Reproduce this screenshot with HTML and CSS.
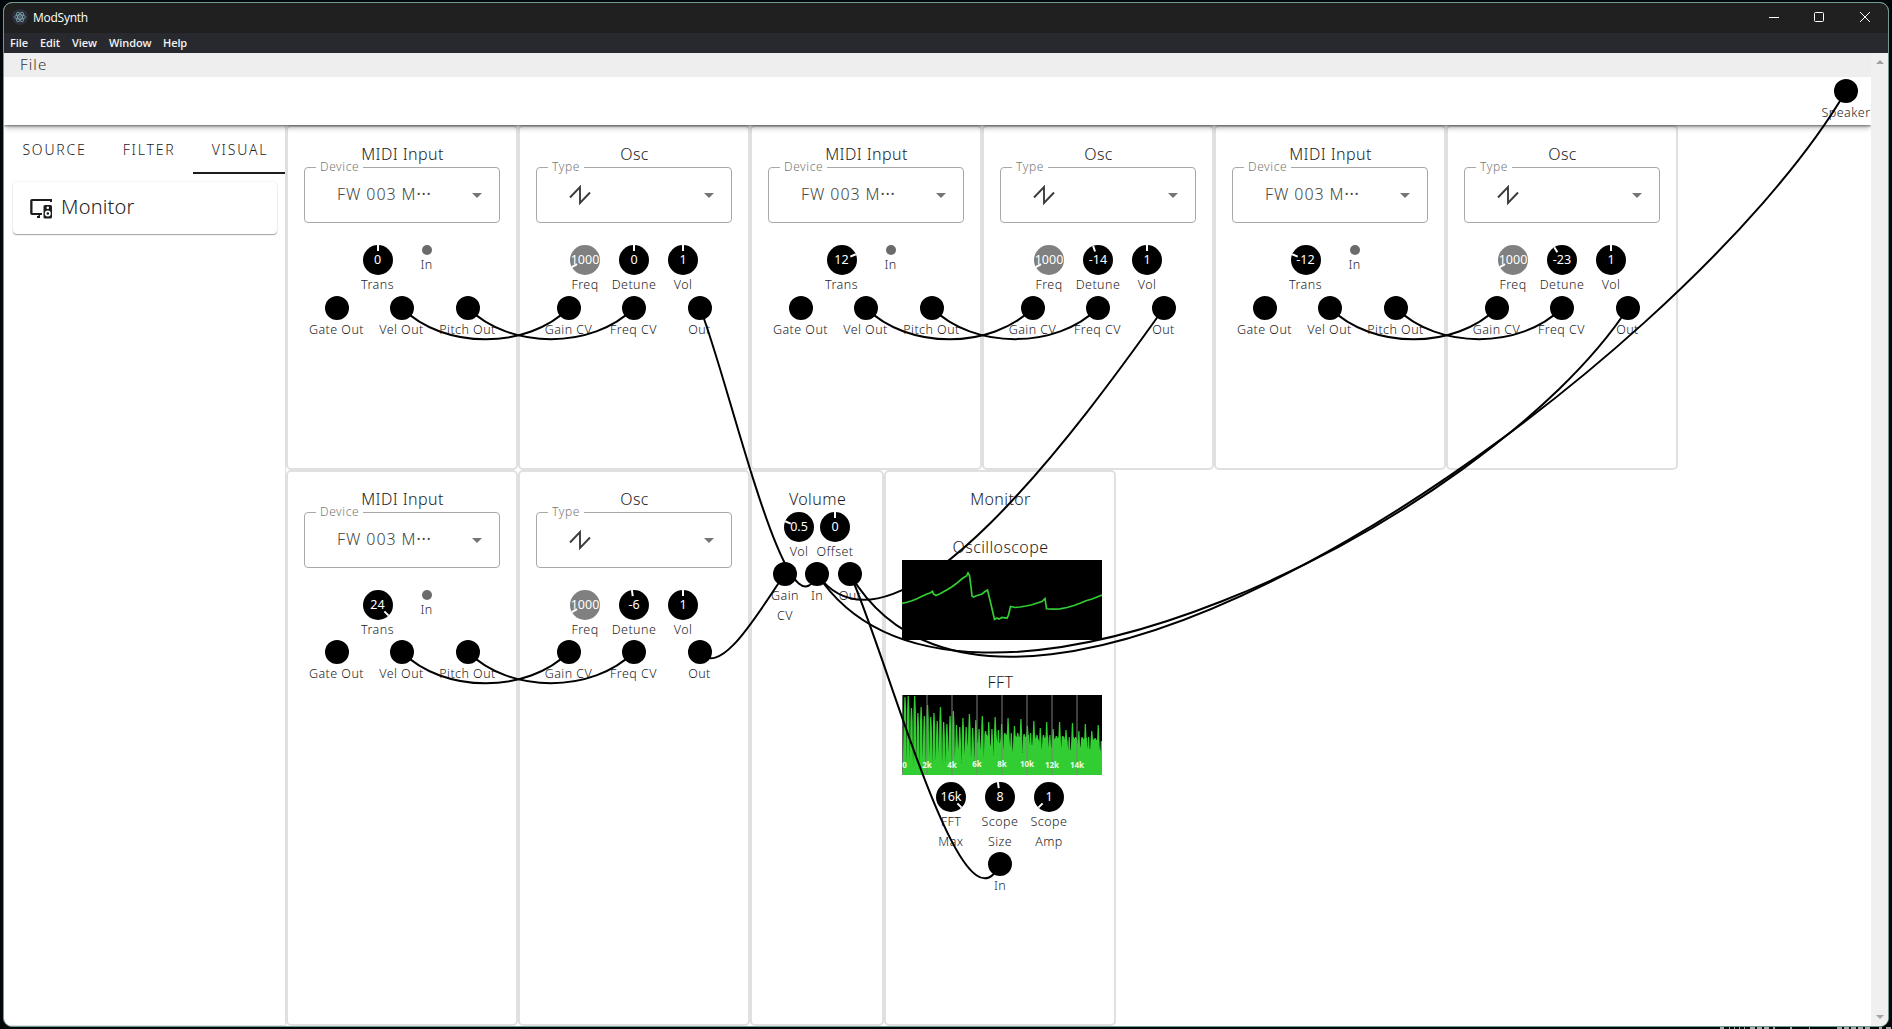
FILE: index.html
```
<!DOCTYPE html>
<html lang="en">
<head>
<meta charset="utf-8">
<title>ModSynth</title>
<link rel="stylesheet" href="styles.css">
</head>
<body>
<div class="window">
  <div class="titlebar">
    <svg class="app-icon" viewBox="0 0 16 16"><circle cx="8" cy="8" r="8" fill="#2b2e3b"/><g fill="none" stroke="#8fb9bf" stroke-width=".7"><ellipse cx="8" cy="8" rx="5.4" ry="2.1"/><ellipse cx="8" cy="8" rx="5.4" ry="2.1" transform="rotate(60 8 8)"/><ellipse cx="8" cy="8" rx="5.4" ry="2.1" transform="rotate(120 8 8)"/></g><circle cx="8" cy="8" r=".8" fill="#8fb9bf"/></svg>
    <span class="app-title">ModSynth</span>
    <svg class="win-buttons" viewBox="0 0 102 12" fill="none" stroke="#fff" stroke-width="1"><path d="M0 6.500h10"/><rect x="45.500" y="1.500" width="9" height="9" rx="1"/><path d="M91 1l10 10M101 1l-10 10"/></svg>
  </div>
  <div class="menubar"><span class="m-file">File</span><span class="m-edit">Edit</span><span class="m-view">View</span><span class="m-window">Window</span><span class="m-help">Help</span></div>
  <div class="client">
    <div class="page">
      <div class="filebar">File</div>
      <header class="header"><div class="speaker"><i class="jack"></i><span class="label">Speaker</span></div></header>
      <div class="body">
        <aside class="sidebar">
          <nav class="tabs"><span class="tab t1">SOURCE</span><span class="tab t2">FILTER</span><span class="tab t3 active">VISUAL</span></nav>
          <div class="card">
            <svg class="monitor-icon" viewBox="0 0 24 24" fill="#1c1c1e"><path d="M3 3h20v3h-2V5H3.500v12H13v2h-2v3H8v-2h1.500v-1H3a1.800 1.800 0 0 1-1.800-1.800V4.800A1.800 1.800 0 0 1 3 3z"/><path fill-rule="evenodd" d="M16 9h5.500A1.500 1.500 0 0 1 23 10.500V21a1.500 1.500 0 0 1-1.500 1.500H16a1.500 1.500 0 0 1-1.500-1.500V10.500A1.500 1.500 0 0 1 16 9zM18.800 10.500a1.300 1.300 0 1 0 0 2.600 1.300 1.300 0 0 0 0-2.600zM18.800 14.500a3 3 0 1 0 0 6 3 3 0 0 0 0-6zm0 1.700a1.300 1.300 0 1 1 0 2.600 1.300 1.300 0 0 1 0-2.600z"/></svg>
            <span>Monitor</span>
          </div>
        </aside>
        <main class="rack">
          <div class="rack-row top">
            <section class="module midi" data-trans="0" data-angle="0"></section>
            <section class="module osc" data-detune="0" data-angle="0"></section>
            <section class="module midi" data-trans="12" data-angle="67.5"></section>
            <section class="module osc" data-detune="-14" data-angle="-19"></section>
            <section class="module midi" data-trans="-12" data-angle="-67.5"></section>
            <section class="module osc" data-detune="-23" data-angle="-31"></section>
          </div>
          <div class="rack-row bottom">
            <section class="module midi" data-trans="24" data-angle="135"></section>
            <section class="module osc" data-detune="-6" data-angle="-8"></section>
            <section class="module volume">
              <h2>Volume</h2>
              <div class="knobs tight">
                <div class="control"><div class="knob" style="--a:-67.5deg">0.5</div><span class="label">Vol</span></div>
                <div class="control"><div class="knob" style="--a:0deg">0</div><span class="label">Offset</span></div>
              </div>
              <div class="jacks">
                <div class="control"><i class="jack"></i><span class="label">Gain<br>CV</span></div>
                <div class="control"><i class="jack"></i><span class="label">In</span></div>
                <div class="control"><i class="jack"></i><span class="label">Out</span></div>
              </div>
            </section>
            <section class="module monitor">
              <h2>Monitor</h2>
              <h2 class="scope-title">Oscilloscope</h2>
              <svg class="display" viewBox="0 0 200 80"><polyline fill="none" stroke="#32cd32" stroke-width="1.700" points="0,43.300 5,42.300 10,40.700 15,38.700 20,36.300 25,34 28,33 30.500,31.300 31.500,34 34,35.500 38,33.700 42,31.500 46,29.300 50,26.700 54,23.800 58,20.500 61,18 64.500,16 66,12.800 67.500,15.500 69,27 70,36 71.500,37 75,35.500 80,34 83,31.500 85.500,30 86.500,34 89,44.500 91,53 92.500,59.500 95,58 97,59 100,57.500 105,58.200 106.500,55 108.500,46.500 113,47.500 118,47 124,46 130,44.800 136,42.800 140,41.500 143,38.500 144.500,48.800 150,49.200 158,48.800 165,47.500 172,45.500 178,43.200 184,40.700 190,39 195,37 200,35"/></svg>
              <h2 class="fft-title">FFT</h2>
              <svg class="display fft" viewBox="0 0 200 80">
                <g class="spectrum"></g>
                <g class="grid"><path d="M.500 0v80M25 0v80M50 0v80M75 0v80M100 0v80M125 0v80M150 0v80M175 0v80"/></g>
                <g class="ticks"><text x="2.500" y="73">0</text><text x="25" y="73">2k</text><text x="50" y="73">4k</text><text x="75" y="72">6k</text><text x="100" y="72">8k</text><text x="125" y="72">10k</text><text x="150" y="73">12k</text><text x="175" y="73">14k</text></g>
              </svg>
              <div class="knobs">
                <div class="control"><div class="knob" style="--a:135deg">16k</div><span class="label">FFT<br>Max</span></div>
                <div class="control"><div class="knob" style="--a:-8deg">8</div><span class="label">Scope<br>Size</span></div>
                <div class="control"><div class="knob" style="--a:-135deg">1</div><span class="label">Scope<br>Amp</span></div>
              </div>
              <div class="jacks"><div class="control"><i class="jack"></i><span class="label">In</span></div></div>
            </section>
          </div>
        </main>
      </div>
    </div>
    <div class="scrollbar"><i class="arrow up"></i><i class="arrow down"></i></div>
  </div>
</div>
<svg class="cables" viewBox="0 0 1892 1029"></svg>
<svg class="desktop-edge" viewBox="0 0 172 2"><path d="M0 1h4M9 1h1M14 1h1M19 1h1M24 1h1M30 1h5M37 1h5M44 1h5M53 1h2M70 1h2M89 1h1M117 1h5M124 1h5M131 1h5M138 1h5M145 1h5M159 1h3M166 1h5" stroke="#ddd" stroke-width="1.500"/></svg>

<template id="midi">
  <h2>MIDI Input</h2>
  <div class="select"><span class="legend">Device</span><span class="value">FW 003 M<b>···</b></span><i class="caret"></i></div>
  <div class="knobs">
    <div class="control"><div class="knob main"></div><span class="label">Trans</span></div>
    <div class="control"><i class="dot"></i><span class="label">In</span></div>
  </div>
  <div class="jacks">
    <div class="control"><i class="jack"></i><span class="label">Gate Out</span></div>
    <div class="control"><i class="jack"></i><span class="label">Vel Out</span></div>
    <div class="control"><i class="jack"></i><span class="label">Pitch Out</span></div>
  </div>
</template>
<template id="osc">
  <h2>Osc</h2>
  <div class="select"><span class="legend">Type</span><svg class="saw" viewBox="0 0 22 20"><path d="M1 12.500L11 2v16L21 7.500" fill="none" stroke="#3c3c3c" stroke-width="1.900"/></svg><i class="caret"></i></div>
  <div class="knobs">
    <div class="control"><div class="knob disabled" style="--a:-118deg">1000</div><span class="label">Freq</span></div>
    <div class="control"><div class="knob main"></div><span class="label">Detune</span></div>
    <div class="control"><div class="knob" style="--a:0deg">1</div><span class="label">Vol</span></div>
  </div>
  <div class="jacks">
    <div class="control"><i class="jack"></i><span class="label">Gain CV</span></div>
    <div class="control"><i class="jack"></i><span class="label">Freq CV</span></div>
    <div class="control"><i class="jack"></i><span class="label">Out</span></div>
  </div>
</template>
<script src="app.js"></script>
</body>
</html>
```
FILE: styles.css
```
* { box-sizing: border-box; }
body {
  margin: 0;
  width: 1892px;
  height: 1029px;
  overflow: hidden;
  background: #02080c;
  font-family: "Noto Sans", sans-serif;
  font-weight: 300;
  color: #1c1c1e;
  padding: 2px 3px;
}
.window {
  height: 1025px;
  border: 1px solid #6f9c8b;
  border-radius: 9px;
  overflow: hidden;
  background: #fff;
  display: flex;
  flex-direction: column;
}
.titlebar {
  height: 30px;
  background: #202020;
  color: #fff;
  display: flex;
  align-items: center;
  padding: 0 17px 2px 8px;
  flex: none;
}
.app-icon { width: 16px; height: 16px; }
.app-title { font: 12px "Open Sans", sans-serif; margin-left: 5px; flex: 1; letter-spacing: -.25px; padding-top: 1px; }
.win-buttons { width: 102px; height: 12px; }
.menubar {
  height: 20px;
  flex: none;
  background: #28292e;
  color: #f2f2f2;
  font: 600 11px/20px "Open Sans", sans-serif;
  letter-spacing: -.1px;
  display: flex;
  padding-left: 6px;
}
.m-file { width: 30px; }
.m-edit { width: 32px; }
.m-view { width: 37px; }
.m-window { width: 54px; }
.client { flex: 1; display: flex; min-height: 0; }
.page { flex: 1; display: flex; flex-direction: column; min-width: 0; overflow: hidden; }
.filebar {
  height: 24px;
  flex: none;
  background: #eee;
  padding-left: 16px;
  font-size: 15px;
  line-height: 23px;
  letter-spacing: 1.100px;
  color: #333;
}
.header {
  height: 48px;
  flex: none;
  background: #fff;
  box-shadow: 0 4px 5px -1px rgba(0,0,0,.28), 0 1px 2px rgba(0,0,0,.45);
  clip-path: inset(0 0 -12px 0);
  position: relative;
  display: flex;
  justify-content: flex-end;
  padding-top: 2px;
}
.speaker { width: 50px; display: flex; flex-direction: column; align-items: center; }
.body { flex: 1; display: flex; min-height: 0; }
.sidebar { width: 282px; border-right: 1px solid #e0e0e0; border-bottom: 1px solid #e0e0e0; }
.tabs { display: flex; height: 49px; }
.tab { font-size: 14px; letter-spacing: 1.800px; text-align: center; line-height: 50px; }
.t1 { width: 101px; }
.t2 { width: 88px; }
.t3 { width: 92px; }
.tab.active { border-bottom: 2px solid #1c1c1e; padding-left: 2px; }
.card {
  margin: 8px 8px 0 9px;
  height: 52px;
  border-radius: 4px;
  box-shadow: 0 1px 1px rgba(0,0,0,.35), 0 0 2px rgba(0,0,0,.12);
  display: flex;
  align-items: center;
  padding-left: 16px;
  font-size: 20px;
  letter-spacing: .2px;
}
.card span { margin-left: 8px; padding-bottom: 3px; }
.monitor-icon { width: 24px; height: 24px; }
.rack { flex: 1; display: flex; flex-direction: column; min-width: 0; }
.rack-row { display: flex; flex: none; }
.top { height: 345px; }
.bottom { height: 556px; }
.module {
  width: 232px;
  border: 2px solid #e0e0e0;
  border-radius: 5px;
  padding: 16px;
  display: flex;
  flex-direction: column;
}
.volume { width: 134px; }
h2 { margin: 0; font-size: 16px; line-height: 23px; height: 24px; font-weight: inherit; letter-spacing: .4px; text-align: center; padding-left: 1px; white-space: nowrap; }
.select {
  margin: 0 0 22px;
  height: 56px;
  flex: none;
  border: 1px solid #a8a8a8;
  border-radius: 4px;
  padding: 0 17px 0 32px;
  display: flex;
  align-items: center;
  justify-content: space-between;
  color: #444;
  position: relative;
}
.legend { position: absolute; left: 11px; top: -9px; background: #fff; font-size: 12px; line-height: 16px; padding: 0 4px; color: #777; letter-spacing: .6px; }
.value { font-size: 16px; letter-spacing: .9px; margin-top: -2px; }
.value b { font-weight: 400; letter-spacing: .8px; }
.saw { width: 22px; height: 20px; }
.caret { border: 5px solid transparent; border-top-color: #757575; border-bottom: 0; }
.knobs { display: flex; justify-content: center; }
.knobs .control { width: 49px; }
.knobs.tight .control { width: 36px; }
.control { display: flex; flex-direction: column; align-items: center; }
.knob {
  width: 30px;
  height: 30px;
  border-radius: 50%;
  background: #000;
  color: #fff;
  font-size: 12.500px;
  font-weight: 400;
  line-height: 29px;
  position: relative;
  isolation: isolate;
  display: flex;
  justify-content: center;
}
.knob::before { content: ""; position: absolute; inset: 0; z-index: -1; background: linear-gradient(#fff, #fff) 50% 0 / 2px 6px no-repeat; transform: rotate(var(--a)); }
.knob.disabled { background: #808080; }
.dot { width: 10px; height: 10px; border-radius: 50%; background: #6b6b6b; }
.label { font-size: 12.500px; line-height: 20px; letter-spacing: .45px; text-align: center; white-space: nowrap; }
.jacks { display: grid; grid-template-columns: 65px 65px 67px; }
.top .jacks { margin-top: 1px; }
.volume .jacks { grid-template-columns: 34px 30px 36px; }
.monitor .jacks { grid-template-columns: 1fr; }
.jacks .control { min-width: 0; }
.jack { width: 24px; height: 24px; border-radius: 50%; background: #000; flex: none; }
.scope-title, .fft-title { margin-top: 24px; }
.fft-title { margin-top: 31px; }
.display { width: 200px; height: 80px; background: #000; flex: none; }
.fft { margin-bottom: 7px; }
.grid path { stroke: #808080; stroke-opacity: .75; stroke-width: 1.300; }
.ticks text { font: 700 8px "Open Sans", sans-serif; fill: #e8ffe8; text-anchor: middle; }
.scrollbar { width: 17px; background: #f0f0f0; display: flex; flex-direction: column; align-items: center; justify-content: space-between; padding: 7px 0 7px; }
.arrow { border: 4px solid transparent; }
.up { border-bottom-color: #a3a3a3; border-top: 0; }
.down { border-top-color: #a3a3a3; border-bottom: 0; }
.cables { position: absolute; left: 0; top: 0; width: 1892px; height: 1029px; fill: none; stroke: #000; stroke-width: 2; pointer-events: none; }
.desktop-edge { position: absolute; left: 1720px; top: 1027px; width: 172px; height: 2px; }
```
FILE: app.js
```
// Fill the repeated modules from their templates.
for (const kind of ['midi', 'osc']) {
  const template = document.getElementById(kind);
  document.querySelectorAll('.module.' + kind).forEach(el => {
    el.append(template.content.cloneNode(true));
    const knob = el.querySelector('.knob.main');
    knob.textContent = kind === 'midi' ? el.dataset.trans : el.dataset.detune;
    knob.style.setProperty('--a', el.dataset.angle + 'deg');
  });
}

// Patch cables between two jacks: both ends droop by a quarter of their distance.
// An optional fifth value sets how far the handles reach sideways.
const cables = [
  [402, 308, 569, 308], [468, 308, 634, 308],
  [866, 308, 1033, 308], [932, 308, 1098, 308],
  [1330, 308, 1497, 308], [1396, 308, 1562, 308],
  [402, 652, 569, 652], [468, 652, 634, 652],
  [700, 308, 817, 574], [1164, 308, 817, 574, 78],
  [1628, 308, 817, 574, 140], [700, 652, 785, 574],
  [850, 574, 1000, 864], [850, 574, 1846, 91, 162]
];
const ns = 'http://www.w3.org/2000/svg';
const layer = document.querySelector('.cables');
for (const [x1, y1, x2, y2, reach] of cables) {
  const dx = reach ? Math.sign(x2 - x1) * reach : (x2 - x1) / 4;
  const sag = Math.hypot(x2 - x1, y2 - y1) / 4;
  const p = document.createElementNS(ns, 'path');
  p.setAttribute('d', `M${x1} ${y1}C${x1 + dx} ${y1 + sag} ${x2 - dx} ${y2 + sag} ${x2} ${y2}`);
  layer.append(p);
}

// Spectrum: one peak per harmonic, valleys filling in towards the high end.
const peaks = [2, 1, 13, 1, 18, 12, 21, 10, 22, 18, 26, 12, 27, 29, 21, 16, 30, 32, 23, 32, 19, 33, 25, 34, 21, 36, 27, 34, 22, 35, 29, 38, 23, 38, 31, 38, 24, 39, 31, 38, 26, 40, 33, 40, 27, 40, 34, 41, 27, 41, 35, 42, 28, 42, 36, 42, 29, 42, 36, 43, 30, 46];
const valleys = [70, 66, 72, 68, 70, 64, 71, 62, 69, 66, 60, 70, 68, 58, 70, 62, 55, 68, 60, 52, 64, 66, 48, 55, 62, 40, 52, 60, 42, 48, 56, 40, 44, 57, 41, 42, 58, 42, 40, 50, 42, 44, 55, 43, 42, 53, 44, 43, 54, 42, 45, 55, 43, 44, 53, 44, 43, 54, 44, 45, 53, 56];
let d = 'M0 80L1 60';
peaks.forEach((y, i) => {
  const x = 3 + i * 3.22;
  const shoulder = Math.min(y + 14, valleys[i]);
  d += `L${x - 1.1} ${shoulder}L${x - .6} ${y}H${x + .6}L${x + 1.2} ${shoulder}L${x + 1.6} ${valleys[i]}`;
});
const area = document.createElementNS(ns, 'path');
area.setAttribute('d', d + 'L200 56V80z');
area.setAttribute('fill', '#32cd32');
document.querySelector('.spectrum').append(area);
```
